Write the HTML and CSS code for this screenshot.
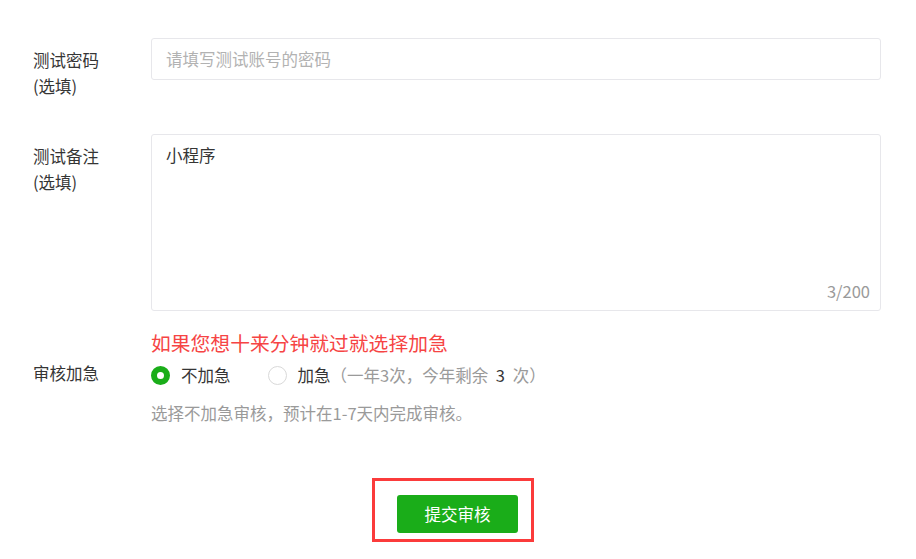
FILE: index.html
```html
<!DOCTYPE html>
<html lang="zh-CN">
<head>
  <meta charset="UTF-8">
  <title>提交审核</title>
  <link rel="stylesheet" href="styles.css">
</head>
<body>
  <div class="form">
    <div class="row">
      <div class="label">测试密码<br>(选填)</div>
      <div class="field">
        <input class="input" type="text" placeholder="请填写测试账号的密码">
      </div>
    </div>

    <div class="row row-note">
      <div class="label">测试备注<br>(选填)</div>
      <div class="field textarea-box">
        <textarea class="textarea">小程序</textarea>
        <span class="counter">3/200</span>
      </div>
    </div>

    <div class="row row-speed">
      <div class="label label-speed">审核加急</div>
      <div class="field">
        <div class="tip">如果您想十来分钟就过就选择加急</div>
        <div class="radios">
          <label class="radio checked"><span class="dot"></span>不加急</label>
          <label class="radio"><span class="dot"></span>加急<span class="quota">（一年3次，今年剩余 <em>3</em> 次）</span></label>
        </div>
        <div class="hint">选择不加急审核，预计在1-7天内完成审核。</div>
      </div>
    </div>
  </div>

  <div class="actions">
    <div class="highlight">
      <button class="btn-submit">提交审核</button>
    </div>
  </div>
</body>
</html>
```

FILE: styles.css
```css
body {
  margin: 0;
  background: #fff;
  color: #353535;
  font-family: "Noto Sans CJK SC", "Noto Sans", sans-serif;
  font-size: 16.5px;
}
.form {
  padding: 38px 35px 0 33px;
}
.row {
  display: flex;
}
.row-note {
  margin-top: 35px;
}
.row-speed {
  margin-top: 18px;
}
.label {
  width: 118px;
  flex-shrink: 0;
  padding-top: 9px;
  line-height: 26px;
  color: #353535;
}
.label-speed {
  padding-top: 31px;
}
.field {
  flex: 1;
}
.input {
  display: block;
  box-sizing: border-box;
  width: 100%;
  height: 42px;
  padding: 0 14px;
  border: 1px solid #e7e7eb;
  border-radius: 3px;
  font: inherit;
  color: #353535;
  outline: none;
}
.input::placeholder {
  color: #b2b2b2;
}
.textarea-box {
  position: relative;
}
.textarea {
  display: block;
  box-sizing: border-box;
  width: 100%;
  height: 177px;
  padding: 7px 14px;
  border: 1px solid #e7e7eb;
  border-radius: 3px;
  font: inherit;
  line-height: 26px;
  color: #353535;
  resize: none;
  outline: none;
}
.counter {
  position: absolute;
  right: 11px;
  bottom: 7px;
  line-height: 26px;
  color: #9a9a9a;
}
.tip {
  font-size: 19.8px;
  line-height: 28px;
  color: #f64444;
}
.radios {
  display: flex;
  align-items: center;
  height: 36px;
}
.radio {
  display: flex;
  align-items: center;
  margin-right: 37px;
  color: #353535;
}
.dot {
  box-sizing: border-box;
  width: 19px;
  height: 19px;
  margin-right: 11px;
  border: 1px solid #d9d9d9;
  border-radius: 50%;
  background: #fff;
}
.radio.checked .dot {
  border: 6px solid #1aad19;
}
.quota {
  color: #9a9a9a;
}
.quota em {
  margin: 0 4px;
  font-style: normal;
  color: #353535;
}
.hint {
  margin-top: 7px;
  line-height: 26px;
  color: #9a9a9a;
}
.actions {
  display: flex;
  justify-content: center;
  margin-top: 52px;
}
.highlight {
  margin-right: 10px;
  padding: 14px 13px 6px 22px;
  border: 3px solid #fb3b3b;
}
.btn-submit {
  display: block;
  width: 121px;
  height: 38px;
  border: 0;
  border-radius: 3px;
  background: #1aad19;
  color: #fff;
  font: inherit;
}
```
